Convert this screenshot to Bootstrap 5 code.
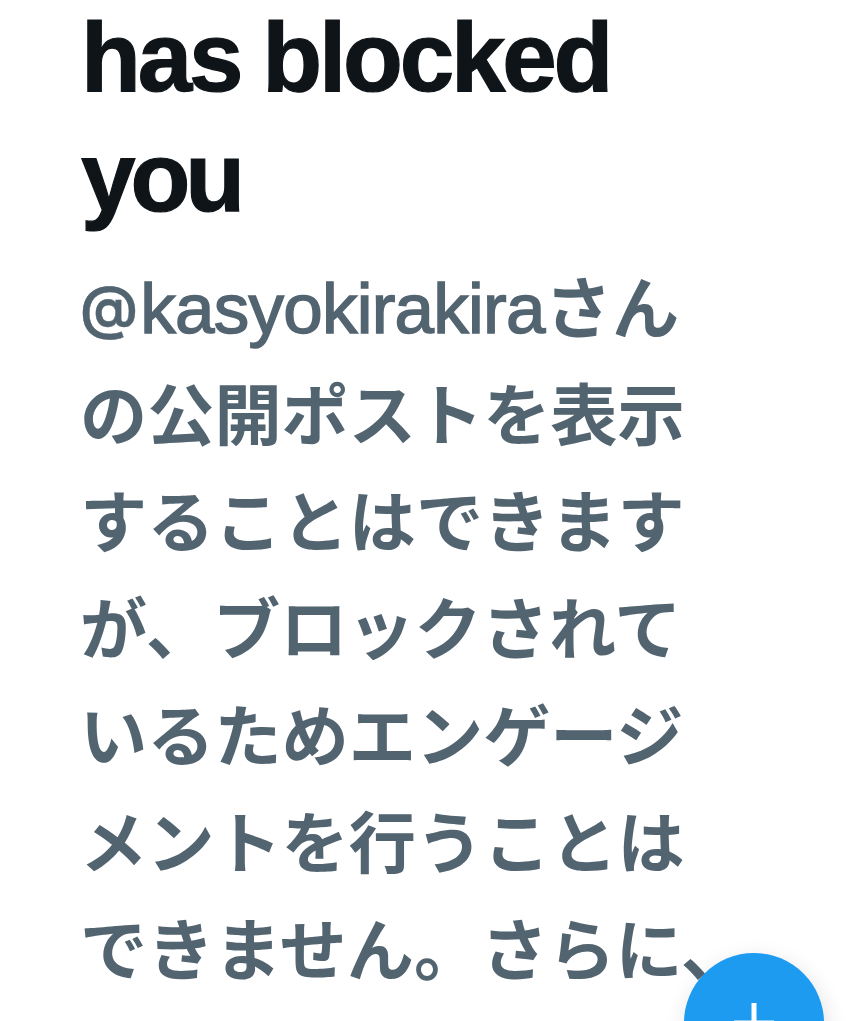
<!DOCTYPE html>
<html lang="ja">
<head>
<meta charset="utf-8">
<meta name="viewport" content="width=device-width, initial-scale=1">
<title>Blocked</title>
<link href="https://cdn.jsdelivr.net/npm/bootstrap@5.3.0/dist/css/bootstrap.min.css" rel="stylesheet">
<style>
html,body{height:1021px;overflow:hidden;background:#fff}
.notice{padding-left:80px;height:1021px}
.notice-title{font:700 98px/120px "Liberation Sans",sans-serif;color:#0f1419;letter-spacing:-3.2px;word-spacing:-2px;white-space:nowrap;-webkit-text-stroke:1.2px #0f1419;margin-top:-3px;padding-left:1px}
.notice-title span,.notice-text .line{display:block;width:max-content;height:107px}
.notice-title span{height:120px}
.notice-title span:last-child{letter-spacing:-5px}
.notice-text{font:700 67.2px/107px "Noto Sans CJK JP",sans-serif;color:#536471;white-space:nowrap;padding-top:12.5px}
.handle{font:400 71px/0 "Liberation Sans",sans-serif;letter-spacing:-.75px;-webkit-text-stroke:1.5px #536471}
.at-sign{font:600 58px/0 Inter,sans-serif;-webkit-text-stroke:.4px #536471;vertical-align:5px;margin-right:3px}
.compose{left:684px;top:953px;width:140px;height:140px;background:#1d9bf0;box-shadow:2px 6px 22px rgba(0,0,0,.12)}
</style>
</head>
<body>
<main class="notice position-relative overflow-hidden d-flex flex-column">
<h1 class="notice-title mb-0"><span>has blocked</span><span>you</span></h1>
<p class="notice-text mb-0"><span class="line"><span class="handle"><span class="at-sign">@</span>kasyokirakira</span>さん</span><span class="line">の公開ポストを表示</span><span class="line">することはできます</span><span class="line">が、ブロックされて</span><span class="line">いるためエンゲージ</span><span class="line">メントを行うことは</span><span class="line">できません。さらに、</span></p>
<button class="compose position-absolute rounded-circle border-0 p-0" aria-label="Compose"><svg class="position-absolute top-0 start-0" width="140" height="140" fill="none" stroke="#fff" stroke-width="5"><path d="M70 50v40M50 70h40"/></svg></button>
</main>
<script src="https://cdn.jsdelivr.net/npm/bootstrap@5.3.0/dist/js/bootstrap.bundle.min.js"></script>
</body>
</html>
